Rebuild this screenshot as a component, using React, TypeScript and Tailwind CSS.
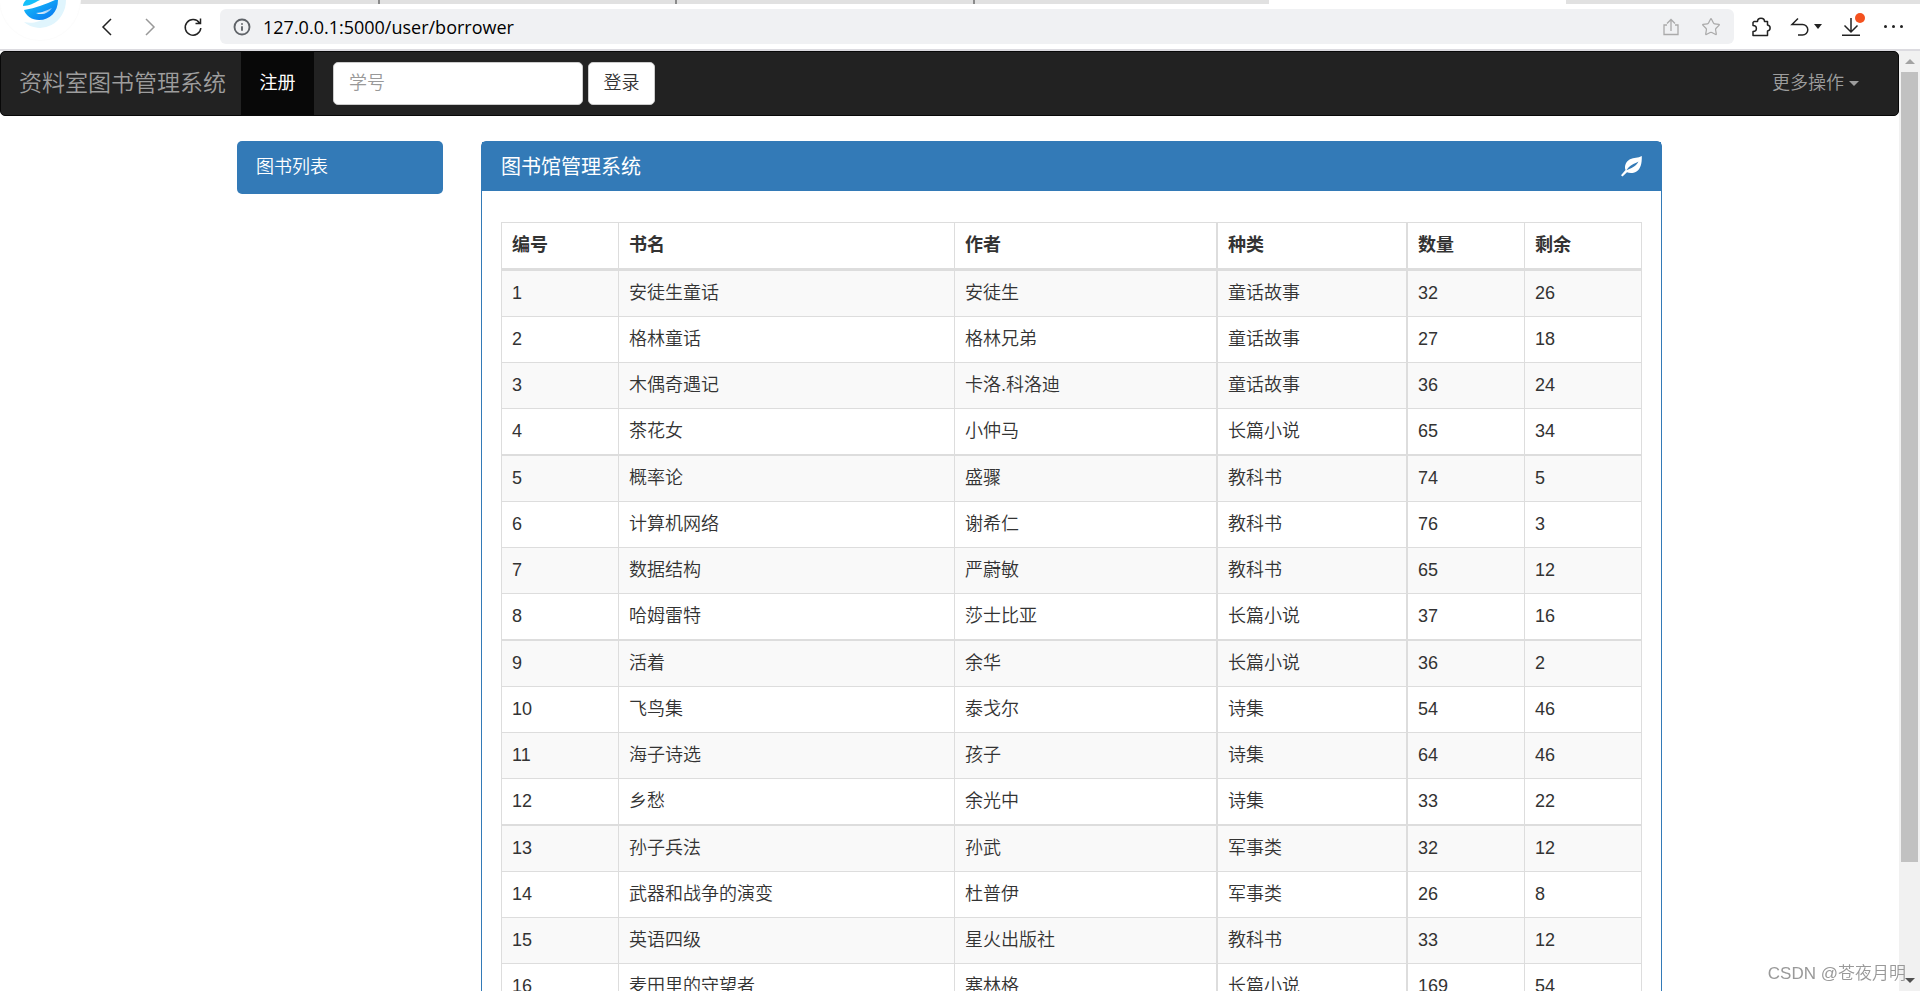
import { Info, Star } from 'lucide-react';

interface Book {
  name: string;
  author: string;
  kind: string;
  total: number;
  left: number;
}

const BOOKS: Book[] = [
  { name: '安徒生童话', author: '安徒生', kind: '童话故事', total: 32, left: 26 },
  { name: '格林童话', author: '格林兄弟', kind: '童话故事', total: 27, left: 18 },
  { name: '木偶奇遇记', author: '卡洛.科洛迪', kind: '童话故事', total: 36, left: 24 },
  { name: '茶花女', author: '小仲马', kind: '长篇小说', total: 65, left: 34 },
  { name: '概率论', author: '盛骤', kind: '教科书', total: 74, left: 5 },
  { name: '计算机网络', author: '谢希仁', kind: '教科书', total: 76, left: 3 },
  { name: '数据结构', author: '严蔚敏', kind: '教科书', total: 65, left: 12 },
  { name: '哈姆雷特', author: '莎士比亚', kind: '长篇小说', total: 37, left: 16 },
  { name: '活着', author: '余华', kind: '长篇小说', total: 36, left: 2 },
  { name: '飞鸟集', author: '泰戈尔', kind: '诗集', total: 54, left: 46 },
  { name: '海子诗选', author: '孩子', kind: '诗集', total: 64, left: 46 },
  { name: '乡愁', author: '余光中', kind: '诗集', total: 33, left: 22 },
  { name: '孙子兵法', author: '孙武', kind: '军事类', total: 32, left: 12 },
  { name: '武器和战争的演变', author: '杜普伊', kind: '军事类', total: 26, left: 8 },
  { name: '英语四级', author: '星火出版社', kind: '教科书', total: 33, left: 12 },
  { name: '麦田里的守望者', author: '塞林格', kind: '长篇小说', total: 169, left: 54 },
];

const COLUMNS = [
  { title: '编号', className: 'w-[117px] border-r' },
  { title: '书名', className: 'border-r' },
  { title: '作者', className: 'w-[263px] border-r-2' },
  { title: '种类', className: 'w-[190px] border-r-2' },
  { title: '数量', className: 'w-[117px] border-r' },
  { title: '剩余', className: 'w-[117px] border-r' },
];

function BrowserBar() {
  return (
    <header className="relative shrink-0 border-b-2 border-[#dcdbe0] bg-white">
      <div className="flex h-1 bg-[#e1e1e1]">
        <div className="w-[380px] border-r-2 border-[#8b8b8b]" />
        <div className="w-[297px] border-r-2 border-[#8b8b8b]" />
        <div className="w-[298px] border-r-2 border-[#8b8b8b]" />
        <div className="w-[294px]" />
        <div className="w-[297px] bg-white" />
      </div>

      <svg className="absolute top-0 left-0" width="84" height="44" viewBox="0 0 84 44" aria-hidden="true">
        <defs>
          <linearGradient id="logo" x1="0" y1="0" x2="1" y2="1">
            <stop offset="0" stopColor="#14c8fa" />
            <stop offset="1" stopColor="#0a6ff0" />
          </linearGradient>
          <linearGradient id="logoShade" x1="0" y1="0" x2="1" y2="0">
            <stop offset="0" stopColor="#fff" />
            <stop offset="1" stopColor="#8fc4f2" />
          </linearGradient>
        </defs>
        <circle cx="40" cy="0" r="41" fill="#fcfcfc" />
        <circle cx="40" cy="0" r="40" fill="#fff" />
        <path d="M66 0a26 28 0 0 1-42 22c12 3 26-2 33-22z" fill="#e0f5fd" />
        <path d="M23 6C29 6 34 3 40 0H26c-2 2-3 4-3 6z" fill="#14c0fa" />
        <path d="M24 10C36 8 46 4 55 0h3c0 12-8 20-19 20-7 0-13-4-15-10z" fill="url(#logo)" />
        <path d="M36 13c6 0 11-3 16-5-3 4-7 6-10 6-3 0-4 0-6-1z" fill="url(#logoShade)" />
      </svg>

      <div className="flex h-[45px] items-center pr-[13px] pl-[95px]">
        <button aria-label="后退" className="mr-[19px]">
          <svg className="size-6" viewBox="0 0 24 24" fill="none" stroke="#222" strokeWidth="1.5">
            <path d="M16 4 8 12l8 8" />
          </svg>
        </button>
        <button aria-label="前进" className="mr-[21px]">
          <svg className="size-6" viewBox="0 0 24 24" fill="none" stroke="#999" strokeWidth="1.5">
            <path d="m8 4 8 8-8 8" />
          </svg>
        </button>
        <button aria-label="刷新" className="mr-[17px]">
          <svg className="size-5" viewBox="0 0 20 20" fill="none" stroke="#222" strokeWidth="1.5">
            <path d="M16.500 6A7.800 7.800 0 1 0 17.800 11M17.500 1.500V6.500H12.500" />
          </svg>
        </button>
        <div className="flex h-[35px] flex-1 items-center rounded-md bg-[#f0f1f3] px-[13px]">
          <Info className="size-[18px] text-[#5f6368]" strokeWidth={2.5} />
          <input
            aria-label="地址"
            defaultValue="127.0.0.1:5000/user/borrower"
            className="ml-3 flex-1 bg-transparent font-['Open_Sans','Noto_Sans_CJK_SC',sans-serif] text-lg font-normal text-black outline-none"
          />
          <button aria-label="分享" className="mr-5">
            <svg className="size-5" viewBox="0 0 20 20" fill="none" stroke="#aaa" strokeWidth="1.3">
              <path d="M6 8H3V17.500H17V8H14M10 14V2.500M6 6.500 10 2.500l4 4" />
            </svg>
          </button>
          <button aria-label="收藏">
            <Star className="size-5 text-[#aaa]" strokeWidth={1.5} />
          </button>
        </div>
        <div className="ml-4 flex items-center gap-[18px]">
          <button aria-label="扩展">
            <svg className="size-[22px]" viewBox="0 0 22 22" fill="none" stroke="#222" strokeWidth="1.5" strokeLinejoin="round">
              <path d="M4 5.500H7.500C7.500 1 14.500 1 14.500 5.500H17.500V9C21 9.500 21 14.500 17.500 15V19.500H3V15.500C7.500 15.500 7.500 9.500 3 9.500V6.500Z" />
            </svg>
          </button>
          <button aria-label="撤销" className="flex items-center gap-1">
            <svg className="size-5" viewBox="0 0 20 20" fill="none" stroke="#222" strokeWidth="1.5">
              <path d="M8 1.500 2 7.500H12.500a5.300 5.300 0 0 1 0 10.600H8" />
            </svg>
            <span className="border-x-4 border-t-5 border-x-transparent border-t-[#222]" />
          </button>
          <button aria-label="下载" className="relative">
            <svg className="size-[22px]" viewBox="0 0 22 22" fill="none" stroke="#222" strokeWidth="1.5">
              <path d="M11 2v14M4.500 9.500 11 16l6.500-6.500M2 19.200h18" />
            </svg>
            <span className="absolute -top-[3px] -right-[3px] size-[10px] rounded-full bg-[#f4511e]" />
          </button>
          <button aria-label="更多" className="flex gap-[5px] p-1">
            <span className="size-[3px] rounded-full bg-[#222]" />
            <span className="size-[3px] rounded-full bg-[#222]" />
            <span className="size-[3px] rounded-full bg-[#222]" />
          </button>
        </div>
      </div>
    </header>
  );
}

function Navbar() {
  return (
    <nav className="flex h-[65px] items-stretch rounded-[5px] border border-[#080808] bg-[#222] text-[#9d9d9d]">
      <a href="#" className="flex w-[240px] items-center pl-[18px] text-[23px]">
        资料室图书管理系统
      </a>
      <a href="#" className="flex w-[73px] items-center justify-center bg-[#080808] font-normal text-white">
        注册
      </a>
      <form className="ml-[19px] flex items-center gap-[5px]">
        <input
          aria-label="学号"
          placeholder="学号"
          className="h-[43px] w-[250px] rounded-[5px] border border-[#ccc] bg-white px-[15px] text-[#555] placeholder-[#999] outline-none"
        />
        <button type="button" className="h-[43px] w-[67px] rounded-[5px] border border-[#ccc] bg-white text-[#333]">
          登录
        </button>
      </form>
      <button className="mr-[39px] ml-auto flex items-center gap-[5px]">
        更多操作
        <span className="border-x-5 border-t-5 border-x-transparent border-t-[#9d9d9d]" />
      </button>
    </nav>
  );
}

function BookTable() {
  return (
    <table className="w-full table-fixed border-separate border-spacing-0 border-t border-l border-[#ddd] text-left">
      <thead>
        <tr className="h-12">
          {COLUMNS.map(col => (
            <th key={col.title} className={`border-b-3 border-[#ddd] px-[10px] font-bold ${col.className}`}>
              {col.title}
            </th>
          ))}
        </tr>
      </thead>
      <tbody>
        {BOOKS.map((book, i) => (
          <tr
            key={book.name}
            className="h-[46px] odd:bg-[#f9f9f9] nth-[4n]:h-[47px] *:border-r *:border-b *:border-[#ddd] *:px-[10px] *:nth-[3]:border-r-2 *:nth-[4]:border-r-2 nth-[4n]:*:border-b-2"
          >
            <td>{i + 1}</td>
            <td>{book.name}</td>
            <td>{book.author}</td>
            <td>{book.kind}</td>
            <td>{book.total}</td>
            <td>{book.left}</td>
          </tr>
        ))}
      </tbody>
    </table>
  );
}

function Scrollbar() {
  return (
    <div className="flex w-[21px] shrink-0 flex-col items-center bg-[#f1f1f1]" aria-hidden="true">
      <div className="flex h-[21px] items-center">
        <span className="border-x-5 border-b-5 border-x-transparent border-b-[#a3a3a3]" />
      </div>
      <div className="w-[17px] grow-[790] bg-[#c1c1c1]" />
      <div className="grow-[108]" />
      <div className="flex h-[21px] items-center">
        <span className="border-x-5 border-t-5 border-x-transparent border-t-[#505050]" />
      </div>
    </div>
  );
}

export default function App() {
  return (
    <div className="flex h-screen flex-col overflow-hidden bg-white font-['Liberation_Sans','Noto_Sans_CJK_SC',sans-serif] text-[18px] leading-[25px] font-[350] text-[#333]">
      <BrowserBar />
      <div className="flex min-h-0 flex-1">
        <div className="min-w-0 flex-1 overflow-hidden">
          <Navbar />
          <div className="mx-auto mt-[25px] flex max-w-[1463px] items-start gap-[38px] px-[19px]">
            <a href="#" className="w-[206px] shrink-0 rounded-[5px] bg-[#337ab7] px-[19px] py-[14px] text-white">
              图书列表
            </a>
            <section className="min-w-0 flex-1 rounded-[5px] border border-[#337ab7]">
              <div className="flex h-[49px] items-center justify-between bg-[#337ab7] px-[19px] text-xl text-white">
                <h3 className="font-normal">图书馆管理系统</h3>
                <svg className="size-[21px]" viewBox="0 0 21 21" fill="#fff" fillRule="evenodd" aria-hidden="true">
                  <path d="M20.800 0C21 8 19.500 13 15.500 15.500 12 17.500 8.500 17.300 6 16.200L1.500 20.500 0 19.300 4.500 14C3 10 5 5.500 9 3.300 13 1.300 17 2.300 20.800 0ZM5.500 14.300C10 12.500 15 10.500 17.500 5.500 13 8 8 9.500 5.500 14.300Z" />
                </svg>
              </div>
              <div className="px-[19px] pt-[31px] pb-5">
                <BookTable />
              </div>
            </section>
          </div>
        </div>
        <Scrollbar />
      </div>
      <div className="pointer-events-none fixed right-[14px] bottom-[5px] text-[17px] text-[#999]">CSDN @苍夜月明</div>
    </div>
  );
}
